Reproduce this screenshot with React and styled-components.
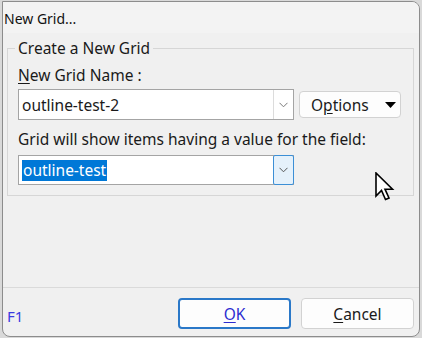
import React from "react";
import styled, { createGlobalStyle } from "styled-components";

const Global = createGlobalStyle`
  html, body { margin: 0; padding: 0; }
  body {
    background: #d9d9d9;
    font-family: "Noto Sans", "Segoe UI", sans-serif;
    width: 422px;
    height: 338px;
    overflow: hidden;
  }
`;

const Screen = styled.div`
  position: relative;
  width: 422px;
  height: 338px;
  padding: 1px 2px 1px 2px;
  box-sizing: border-box;
  display: flex;
`;

const Dialog = styled.div`
  flex: 1;
  display: flex;
  flex-direction: column;
  background: #f0f0f0;
  border: 1px solid #8c8c8c;
  border-radius: 0 8px 8px 8px;
  overflow: hidden;
  color: #1a1a1a;
  font-size: 15.5px;
`;

const TitleBar = styled.div`
  height: 31px;
  display: flex;
  align-items: center;
  padding-left: 1px;
  background: #f3f3f3;
  font-size: 14px;
  color: #111;
  padding-top: 2px;
  box-sizing: border-box;
`;

const Content = styled.div`
  flex: 1;
  padding: 5px 5px 0 4px;
`;

const Group = styled.fieldset`
  margin: 0;
  border: 1px solid #d6d6d6;
  padding: 8px 11px 10px 10px;
  display: flex;
  flex-direction: column;
`;

const Legend = styled.legend`
  padding: 0 3px;
  margin-left: -3px;
  line-height: 20px;
  font-size: 15.5px;
  color: #1a1a1a;
`;

const Label = styled.div`
  line-height: 19px;
  font-size: 15.5px;
  margin-top: ${(p) => p.$mt || 0}px;
  color: #1a1a1a;
`;

const Row = styled.div`
  display: flex;
  align-items: center;
  gap: 5px;
  margin-top: ${(p) => p.$mt || 0}px;
`;

const Combo = styled.div`
  width: 276px;
  height: ${(p) => p.$h}px;
  box-sizing: border-box;
  border: 1px solid #a4a4a4;
  background: #fff;
  display: flex;
  align-items: stretch;
`;

const ComboText = styled.div`
  flex: 1;
  display: flex;
  align-items: center;
  padding-left: 3px;
  font-size: 15.5px;
`;

const Selected = styled.span`
  background: #0078d7;
  color: #fff;
  line-height: 21px;
  padding: 0 1px;
`;

const DropBtn = styled.div`
  width: 19px;
  display: flex;
  align-items: center;
  justify-content: center;
  border-left: 1px solid ${(p) => (p.$active ? "#0078d7" : "#dcdcdc")};
  background: ${(p) => (p.$active ? "#e5f1fb" : "#fff")};
  ${(p) =>
    p.$active &&
    `border: 1px solid #3c8fd6; border-radius: 2px; margin: -1px -1px -1px 0;`}
`;

const Button = styled.button`
  width: ${(p) => p.$w}px;
  height: ${(p) => p.$h}px;
  box-sizing: border-box;
  background: #fdfdfd;
  border: ${(p) => (p.$primary ? "2px solid #2a78c8" : "1px solid #d2d2d2")};
  border-radius: 4px;
  font-family: inherit;
  font-size: 15.5px;
  color: ${(p) => (p.$primary ? "#2c2cd0" : "#1a1a1a")};
  display: flex;
  align-items: center;
  justify-content: center;
  padding: 0;
  cursor: default;
`;

const MenuButton = styled(Button)`
  justify-content: flex-start;
  padding-left: 11px;
  gap: 16px;
`;

const U = styled.span`
  text-decoration: underline;
  text-underline-offset: 2px;
`;

const Footer = styled.div`
  height: 49px;
  border-top: 1px solid #dadada;
  display: flex;
  align-items: flex-start;
  padding: 10px 5px 0 4px;
  box-sizing: border-box;
  gap: 10px;
`;

const Help = styled.div`
  flex: 1;
  color: #3b3be0;
  font-size: 15px;
  padding-top: 9px;
  line-height: 18px;
`;

const Cursor = styled.svg`
  position: absolute;
  left: 375px;
  top: 172px;
`;

const Chevron = ({ color = "#7a7a7a" }) => (
  <svg width="9" height="6" viewBox="0 0 9 6">
    <path d="M0.5 0.8 L4.5 4.8 L8.5 0.8" fill="none" stroke={color} strokeWidth="1" />
  </svg>
);

export default function App() {
  return (
    <>
      <Global />
      <Screen>
        <Dialog>
          <TitleBar>New Grid...</TitleBar>
          <Content>
            <Group>
              <Legend>Create a New Grid</Legend>
              <Label>
                <U>N</U>ew Grid Name :
              </Label>
              <Row $mt={4}>
                <Combo $h={31}>
                  <ComboText>outline-test-2</ComboText>
                  <DropBtn>
                    <Chevron />
                  </DropBtn>
                </Combo>
                <MenuButton $w={102} $h={27}>
                  <span>
                    O<U>p</U>tions
                  </span>
                  <svg width="11" height="6" viewBox="0 0 11 6">
                    <path d="M0 0 L11 0 L5.5 6 Z" fill="#000" />
                  </svg>
                </MenuButton>
              </Row>
              <Label $mt={10}>Grid will show items having a value for the field:</Label>
              <Row $mt={6}>
                <Combo $h={30}>
                  <ComboText>
                    <Selected>outline-test</Selected>
                  </ComboText>
                  <DropBtn $active>
                    <Chevron color="#555" />
                  </DropBtn>
                </Combo>
              </Row>
            </Group>
          </Content>
          <Footer>
            <Help>F1</Help>
            <Button $w={113} $h={31} $primary>
              <span>
                <U>O</U>K
              </span>
            </Button>
            <Button $w={113} $h={31}>
              <span>
                <U>C</U>ancel
              </span>
            </Button>
          </Footer>
        </Dialog>
        <Cursor width="20" height="30" viewBox="0 0 20 30">
          <path
            d="M1 1 L1 24 L6.5 18.5 L10.5 27.5 L14 26 L10 17.2 L17.5 17.2 Z"
            fill="#fff"
            stroke="#000"
            strokeWidth="1.6"
            strokeLinejoin="miter"
          />
        </Cursor>
      </Screen>
    </>
  );
}
